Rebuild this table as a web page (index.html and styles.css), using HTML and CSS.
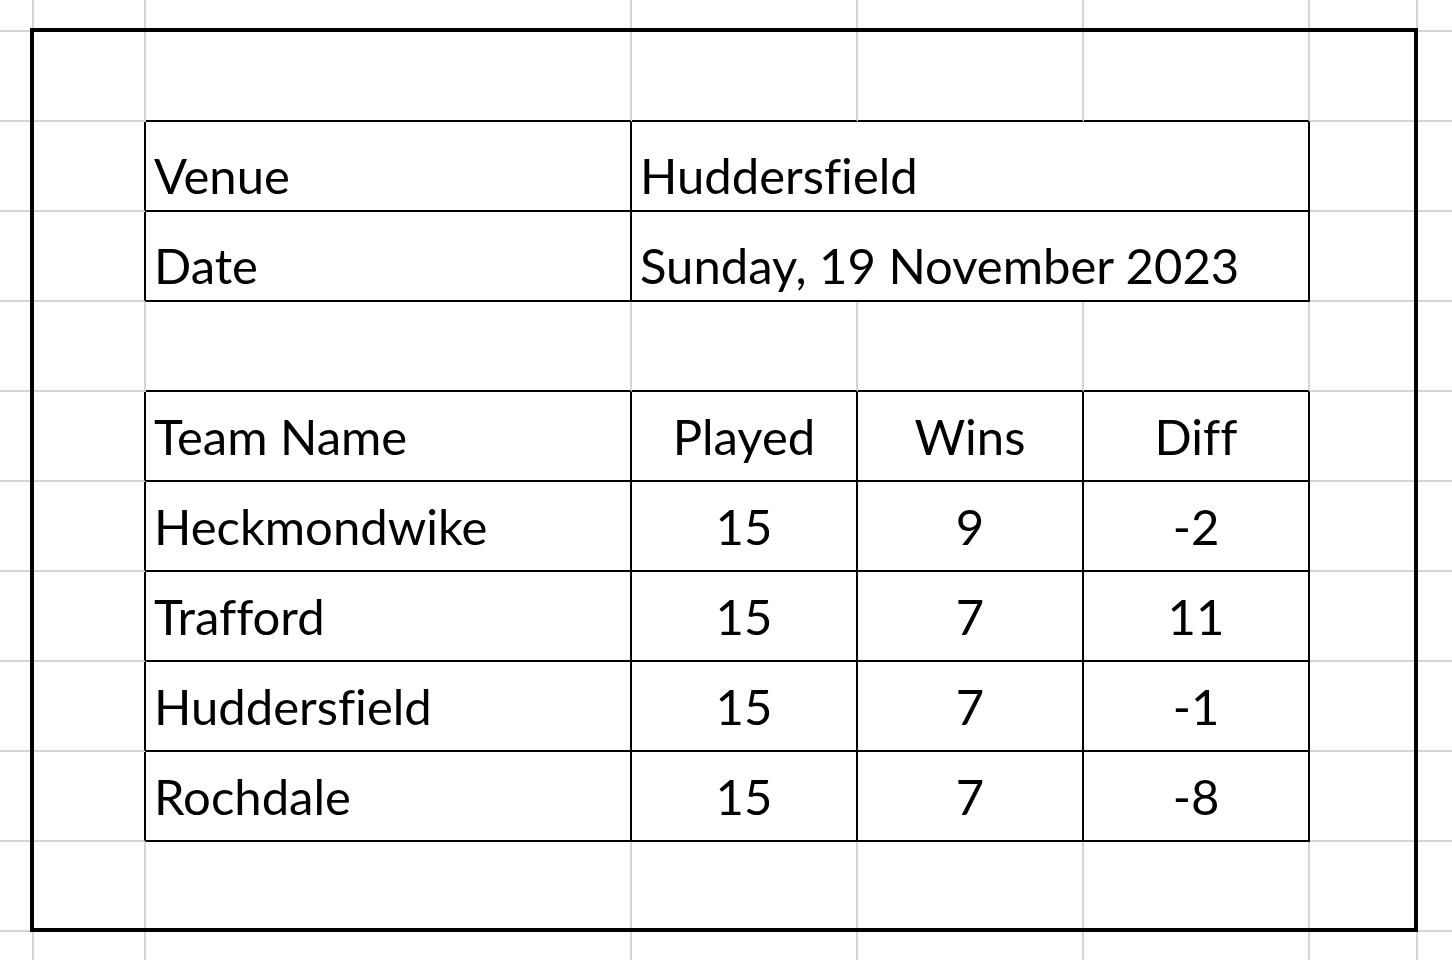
FILE: index.html
```html
<!DOCTYPE html>
<html lang="en">
<head>
<meta charset="utf-8">
<title>Standings</title>
<link rel="stylesheet" href="styles.css">
</head>
<body>
<div class="sheet">
  <!-- row 0 -->
  <div class="c"></div><div class="c"></div><div class="c"></div><div class="c"></div><div class="c"></div><div class="c"></div><div class="c"></div><div class="c"></div>
  <!-- row 1 -->
  <div class="c"></div><div class="c"></div><div class="c bb"></div><div class="c bb"></div><div class="c bb"></div><div class="c bb"></div><div class="c"></div><div class="c"></div>
  <!-- row 2 -->
  <div class="c"></div><div class="c br"></div><div class="c d info">Venue</div><div class="c d info span3">Huddersfield</div><div class="c"></div><div class="c"></div>
  <!-- row 3 -->
  <div class="c"></div><div class="c br"></div><div class="c d info">Date</div><div class="c d info span3">Sunday, 19 November 2023</div><div class="c"></div><div class="c"></div>
  <!-- row 4 -->
  <div class="c"></div><div class="c"></div><div class="c bb"></div><div class="c bb"></div><div class="c bb"></div><div class="c bb"></div><div class="c"></div><div class="c"></div>
  <!-- row 5 header -->
  <div class="c"></div><div class="c br"></div><div class="c d">Team Name</div><div class="c d num">Played</div><div class="c d num">Wins</div><div class="c d num">Diff</div><div class="c"></div><div class="c"></div>
  <!-- row 6 -->
  <div class="c"></div><div class="c br"></div><div class="c d">Heckmondwike</div><div class="c d num">15</div><div class="c d num">9</div><div class="c d num">-2</div><div class="c"></div><div class="c"></div>
  <!-- row 7 -->
  <div class="c"></div><div class="c br"></div><div class="c d">Trafford</div><div class="c d num">15</div><div class="c d num">7</div><div class="c d num">11</div><div class="c"></div><div class="c"></div>
  <!-- row 8 -->
  <div class="c"></div><div class="c br"></div><div class="c d">Huddersfield</div><div class="c d num">15</div><div class="c d num">7</div><div class="c d num">-1</div><div class="c"></div><div class="c"></div>
  <!-- row 9 -->
  <div class="c"></div><div class="c br"></div><div class="c d">Rochdale</div><div class="c d num">15</div><div class="c d num">7</div><div class="c d num">-8</div><div class="c"></div><div class="c"></div>
  <!-- row 10 -->
  <div class="c"></div><div class="c"></div><div class="c"></div><div class="c"></div><div class="c"></div><div class="c"></div><div class="c"></div><div class="c"></div>
  <!-- row 11 -->
  <div class="c"></div><div class="c"></div><div class="c"></div><div class="c"></div><div class="c"></div><div class="c"></div><div class="c"></div><div class="c"></div>

  <div class="frame"></div>
</div>
</body>
</html>
```
FILE: styles.css
```css
html, body {
  margin: 0;
  padding: 0;
  background: #ffffff;
  overflow: hidden;
}

.sheet {
  position: relative;
  display: grid;
  grid-template-columns: 34px 112px 486px 226px 226px 226px 108px 60px;
  grid-template-rows: 32px repeat(10, 90px) 60px;
  width: 1452px;
  height: 960px;
  overflow: hidden;
  font-family: "Lato", "Noto Sans", sans-serif;
  font-size: 49px;
  line-height: 49px;
  font-variant-ligatures: none;
  font-feature-settings: "liga" 0;
  color: #000000;
}

.c {
  box-sizing: border-box;
  border-right: 2px solid #d5d5d5;
  border-bottom: 2px solid #d5d5d5;
  display: flex;
  align-items: center;
  padding-left: 8px;
  white-space: nowrap;
  min-width: 0;
}

.bb {
  border-bottom-color: #000000;
}

.br {
  border-right-color: #000000;
}

.d {
  border-right-color: #000000;
  border-bottom-color: #000000;
}

.info {
  align-items: flex-end;
  padding-bottom: 10px;
}

.span3 {
  grid-column: span 3;
}

.num {
  justify-content: center;
  padding-left: 0;
}

/* thick outline around the printed range, drawn over the cells */
.frame {
  position: absolute;
  grid-row: 2 / 12;
  grid-column: 2 / 8;
  top: -4px;
  left: -4px;
  right: 0;
  bottom: 0;
  border: 4px solid #000000;
  pointer-events: none;
}
```
